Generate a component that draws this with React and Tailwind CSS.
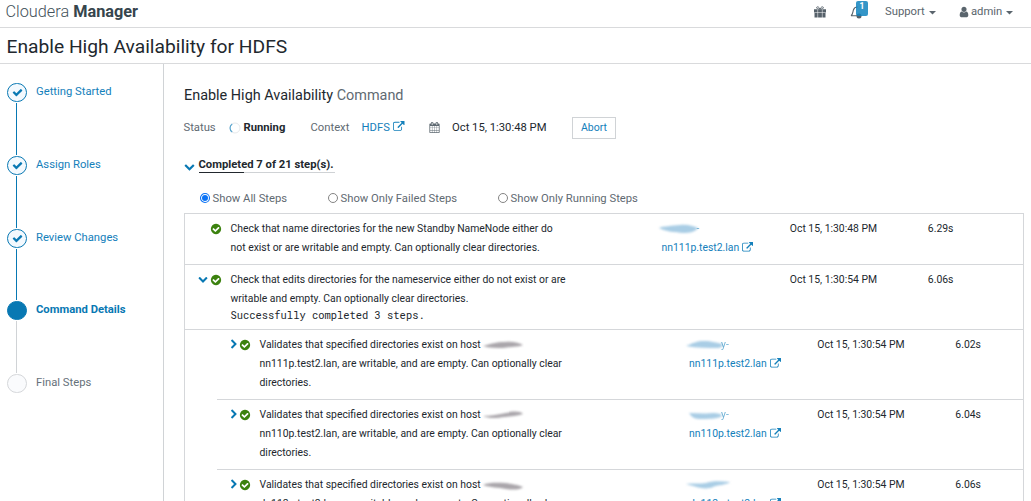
const PATHS = {
  external:
    "M1408 928v320q0 119-84.5 203.5t-203.5 84.5h-832q-119 0-203.5-84.5t-84.5-203.5v-832q0-119 84.5-203.5t203.5-84.5h704q14 0 23 9t9 23v64q0 14-9 23t-23 9h-704q-66 0-113 47t-47 113v832q0 66 47 113t113 47h832q66 0 113-47t47-113v-320q0-14 9-23t23-9h64q14 0 23 9t9 23zm384-864v512q0 26-19 45t-45 19-45-19l-176-176-652 652q-10 10-23 10t-23-10l-114-114q-10-10-10-23t10-23l652-652-176-176q-19-19-19-45t19-45 45-19h512q26 0 45 19t19 45z",
  checkCircle:
    "M1412 734q0-28-18-46l-91-90q-19-19-45-19t-45 19l-408 407-226-226q-19-19-45-19t-45 19l-91 90q-18 18-18 46 0 27 18 45l362 362q19 19 45 19 27 0 46-19l543-543q18-18 18-45zm252 162q0 209-103 385.5t-279.5 279.5-385.5 103-385.5-103-279.5-279.5-103-385.5 103-385.5 279.5-279.5 385.5-103 385.5 103 279.5 279.5 103 385.5z",
  check:
    "M1671 566q0 40-28 68l-724 724-136 136q-28 28-68 28t-68-28l-136-136-362-362q-28-28-28-68t28-68l136-136q28-28 68-28t68 28l294 295 656-657q28-28 68-28t68 28l136 136q28 28 28 68z",
  chevron:
    "M1683 808l-742 741q-19 19-45 19t-45-19l-742-741q-19-19-19-45.5t19-45.5l166-165q19-19 45-19t45 19l531 531 531-531q19-19 45-19t45 19l166 165q19 19 19 45.5t-19 45.5z",
  calendar:
    "M192 1664h288v-288h-288v288zm352 0h320v-288h-320v288zm-352-352h288v-320h-288v320zm352 0h320v-320h-320v320zm-352-384h288v-288h-288v288zm736 736h320v-288h-320v288zm-384-736h320v-288h-320v288zm768 736h288v-288h-288v288zm-384-352h320v-320h-320v320zm-352-864v-288q0-13-9.500-22.500t-22.500-9.500h-64q-13 0-22.500 9.500t-9.500 22.500v288q0 13 9.500 22.500t22.500 9.500h64q13 0 22.500-9.500t9.500-22.500zm736 864h288v-320h-288v320zm-384-384h320v-288h-320v288zm384 0h288v-288h-288v288zm32-480v-288q0-13-9.500-22.500t-22.500-9.500h-64q-13 0-22.500 9.500t-9.500 22.500v288q0 13 9.500 22.500t22.500 9.500h64q13 0 22.500-9.500t9.500-22.500zm384-64v1280q0 52-38 90t-90 38h-1408q-52 0-90-38t-38-90v-1280q0-52 38-90t90-38h128v-96q0-66 47-113t113-47h64q66 0 113 47t47 113v96h384v-96q0-66 47-113t113-47h64q66 0 113 47t47 113v96h128q52 0 90 38t38 90z",
  user:
    "M1536 1399q0 109-62.500 187t-150.500 78h-854q-88 0-150.500-78t-62.500-187q0-85 8.500-160.500t31.500-152 58.500-131 94-89 134.500-34.500q131 128 313 128t313-128q76 0 134.500 34.500t94 89 58.500 131 31.500 152 8.500 160.500zm-256-887q0 159-112.500 271.500t-271.500 112.500-271.500-112.500-112.500-271.500 112.500-271.500 271.500-112.500 271.500 112.500 112.500 271.500z",
};

function Icon({ name, className }) {
  return (
    <svg viewBox="0 0 1792 1792" fill="currentColor" className={"shrink-0 overflow-visible " + className}>
      <path d={PATHS[name]} />
    </svg>
  );
}

function Caret() {
  return (
    <svg viewBox="0 0 7 4" className="mt-[2px] ml-1 h-[4px] w-[7px] fill-current">
      <path d="M0 0h7L3.500 3.600z" />
    </svg>
  );
}

function TopBar() {
  return (
    <header className="flex h-7 shrink-0 items-center border-b border-[#d9dadc] pl-[5.500px] text-[#5a656d]">
      <div className="-mt-[3px] text-[16.300px] leading-5 text-[#43525a]">
        <span className="font-light">Cloudera</span> <span className="font-bold text-[#36454d]">Manager</span>
      </div>
      <div className="ml-auto flex h-full items-center pb-[3px] text-[11.250px]">
        <svg viewBox="0 0 12 12" className="mr-[24px] h-3 w-3 fill-[#56616a]">
          <path d="M0 3.300h3.600v3.200H0zM4.100 3.300h3.800v3.200H4.100zM8.400 3.300H12v3.200H8.400zM.5 7h3.100v4.600H.5zM4.100 7h3.800v4.600H4.100zM8.400 7h3.100v4.600H8.400z" />
          <path d="M6 3C4.800.4 2.600.3 2.600 1.700 2.600 3 4.500 3 6 3zm0 0C7.200.4 9.400.3 9.400 1.700 9.400 3 7.500 3 6 3z" fill="none" stroke="#56616a" strokeWidth="0.900" />
        </svg>
        <div className="relative mr-[17px] h-[17px] w-[18px]">
          <svg viewBox="0 0 18 17" className="h-[17px] w-[18px]" fill="none" stroke="#56616a">
            <path d="M1 11.800h8.500M1 11.800c2-1.600 1.700-4 2.500-6C4.200 3.500 5.500 3 7.500 3" strokeWidth="1.100" />
            <circle cx="9" cy="12" r="2.500" fill="#56616a" stroke="none" />
          </svg>
          <div className="absolute -top-[3px] right-0 flex h-[15px] w-3 items-center justify-center rounded-[2px] bg-[#1182bd]/85 pb-[3px] text-[8.500px] font-bold text-white">
            1
          </div>
        </div>
        <div className="flex w-[74px] items-center">Support<Caret /></div>
        <div className="flex w-[72px] items-center">
          <Icon name="user" className="-mt-px mr-[1px] -ml-px h-[12px] w-[12px]" />
          admin
          <Caret />
        </div>
      </div>
    </header>
  );
}

const STEPS = [
  { label: "Getting Started", state: "done" },
  { label: "Assign Roles", state: "done" },
  { label: "Review Changes", state: "done" },
  { label: "Command Details", state: "current" },
  { label: "Final Steps", state: "todo" },
];

const CIRCLE = {
  done: "border-[#0878b3] bg-[#f3f9fe] text-[#0878b3]",
  current: "border-[#0878b3] bg-[#0878b3]",
  todo: "border-[#d5d7da] bg-[#fafbfd]",
};
const LABEL = {
  done: "text-[#1480bb]",
  current: "font-bold text-[#0878b3]",
  todo: "text-[#66717a]",
};

function Sidebar() {
  return (
    <nav className="w-[164px] shrink-0 border-r border-[#d0d3d6] pt-[19.200px] pl-[7px]">
      {STEPS.map((s, i) => (
        <div key={s.label} className="flex h-[72.700px]">
          <div className="flex w-5 flex-col items-center">
            <div className={"flex h-[19px] w-5 shrink-0 items-center justify-center rounded-full border " + CIRCLE[s.state]}>
              {s.state === "done" && <Icon name="check" className="h-[11px] w-[11px]" />}
            </div>
            {i < 4 && (
              <div className={"my-[1px] mr-[1px] w-px flex-1 " + (s.state === "current" ? "bg-[#d0d3d6]" : "bg-[#0878b3]")} />
            )}
          </div>
          <div className={"ml-[9px] text-[11.250px] leading-[17px] " + LABEL[s.state]}>{s.label}</div>
        </div>
      ))}
    </nav>
  );
}

function Radio({ checked, label, className }) {
  return (
    <label className={"flex items-center " + className}>
      <svg viewBox="0 0 10 10" className="-mt-[2px] mr-[2.500px] h-[10px] w-[10px] overflow-visible">
        <circle cx="5" cy="5" r="4.500" fill="#fff" stroke={checked ? "#0b73f5" : "#767676"} strokeWidth={checked ? 1.1 : 0.9} />
        {checked && <circle cx="5" cy="5" r="3" fill="#0b73f5" />}
      </svg>
      <span className="leading-4">{label}</span>
    </label>
  );
}

const SMUDGES = [
  "M1 5C5 3 14 3 22 2c7-1 13 1 18 3-3 4-8 5-15 5-8-1-17-1-24-5z",
  "M1 7C8 4 12 2 19 2c8 0 13 2 18 3 2 2-1 4-5 4-9 0-20 0-31-2z",
  "M4 4c8 0 17 1 24 0 5 0 9 1 9 3-4 3-14 3-23 3-5 0-8-3-10-6z",
  "M1 5c7-1 13 0 20-1 5-2 14-2 24-1-3 3-13 3-17 5-8 3-13 1-27-3z",
];
const GRAY_SMUDGES = [
  "M0 7c8-2 13-4 22-4 8-1 14 1 18 3-5 2-13 2-20 3-7 0-14 0-20-2z",
  "M0 7c8 0 16-2 23-3 7-2 14-2 17 1-6 2-12 2-18 3-8 1-15 2-22-1z",
  "M0 6c7-3 15-2 22-2 8 1 13 2 18 4-3 3-10 3-17 2-8-2-15-1-23-4z",
];

function Smudge({ d, color, className }) {
  return (
    <svg viewBox="0 0 44 12" className={"h-3 w-11 shrink-0 overflow-visible blur-[1.300px] " + className}>
      <path d={d} fill={color} />
    </svg>
  );
}

function Row({ child, toggle, lines, mono, host, smudge, mark, graySmudge, date, duration }) {
  return (
    <div className={"flex border-b border-[#d5d7da] pt-[5px] pb-[7px] " + (child ? "ml-8 pl-[11px]" : "pl-[13px]")}>
      <div className="flex h-[19px] w-[33px] shrink-0 items-center">
        <span className={"flex " + (child ? "w-[11px]" : "w-[12px]")}>
          {toggle && <Icon name="chevron" className={"h-[10px] w-[10px] text-[#0878b3] " + (toggle === "right" ? "-mt-[1px] -ml-[0.500px] -rotate-90" : "-mt-px")} />}
        </span>
        <Icon name="checkCircle" className="mt-px h-3 w-3 text-[#3c820f]" />
      </div>
      <div className={"shrink-0 " + (child ? "-ml-[1.500px] w-[425.500px]" : "-ml-[0.500px] w-[427px]")}>
        {lines.map((l, i) => (
          <div key={l} className="flex h-[19px] items-center whitespace-nowrap">
            {l}
            {i === 0 && graySmudge && <Smudge d={graySmudge} color="#aaa6ab" className="ml-[2px]" />}
          </div>
        ))}
        {mono && <div className="h-[14px] font-['Roboto_Mono','DejaVu_Sans_Mono',monospace] text-[10.450px] leading-[14px]">{mono}</div>}
      </div>
      <div className="w-[132.300px] shrink-0 text-[#1480bb]">
        {host && (
          <>
            <div className="flex h-[19px] items-center">
              <Smudge d={smudge} color="#a9cde5" className="" />
              <span className={"opacity-60 " + (mark === "-" ? "-ml-[5px]" : "-ml-2")}>{mark}</span>
            </div>
            <div className="flex h-[19px] items-center pl-[4px]">
              {host}
              <Icon name="external" className="-mt-px ml-[3px] h-[11px] w-[11px]" />
            </div>
          </>
        )}
      </div>
      <div className="w-[138px] shrink-0 leading-[19px]">{date}</div>
      <div className="leading-[19px]">{duration}</div>
    </div>
  );
}

const CHILDREN = [
  { node: "nn111p", duration: "6.02s", mark: "y-" },
  { node: "nn110p", duration: "6.04s", mark: "y-" },
  { node: "dn112p", duration: "6.06s", mark: "" },
];

function Main() {
  return (
    <main className="min-w-0 flex-1 overflow-hidden pr-[7px] pl-5 text-[11.250px] text-[#22282e]">
      <h2 className="pt-[22px] text-[14.430px] leading-5">
        Enable High Availability <span className="text-[#5f6a72]">Command</span>
      </h2>
      <div className="mt-[11px] flex h-[22px] items-center">
        <span className="-ml-[0.500px] w-[45px] text-[#5f6a72]">Status</span>
        <svg viewBox="0 0 12 12" className="mr-[3px] h-3 w-3" fill="none">
          <circle cx="6" cy="6" r="5" stroke="#e6e9eb" />
          <path d="M3.200 1.900A5 5 0 0 0 3.200 10.100" stroke="#5ba6cf" strokeWidth="1.200" />
        </svg>
        <span className="w-[67px] font-bold">Running</span>
        <span className="w-[51px] text-[#5f6a72]">Context</span>
        <span className="flex w-[67.500px] items-center text-[#1480bb]">
          HDFS
          <Icon name="external" className="-mt-[2px] ml-[3px] h-[11.500px] w-[11.500px]" />
        </span>
        <Icon name="calendar" className="-mt-[2px] mr-[12px] h-[11px] w-[11px] text-[#5f6a72]" />
        <span className="w-[120px]">Oct 15, 1:30:48 PM</span>
        <button className="h-[22px] w-11 border border-[#d0d3d6] text-[10.500px] text-[#1480bb]">Abort</button>
      </div>
      <div className="mt-[15px] flex h-[20px] items-center">
        <Icon name="chevron" className="mt-[4px] mr-[3.500px] h-[11px] w-[11px] text-[#0878b3]" />
        <div>
          <div className="pt-px leading-[17px] font-bold">Completed 7 of 21 step(s).</div>
          <div className="-mt-px h-px w-[136px] bg-[#cfd2d5]">
            <div className="h-px w-[45px] bg-[#22282e]" />
          </div>
        </div>
      </div>
      <div className="mt-[16px] flex h-[18px] items-center pl-4 text-[#5f6a72]">
        <Radio checked label="Show All Steps" className="w-[128px]" />
        <Radio label="Show Only Failed Steps" className="w-[170px]" />
        <Radio label="Show Only Running Steps" className="" />
      </div>
      <section className="mt-[5px] border border-[#d5d7da] text-[10.400px]">
        <Row
          lines={["Check that name directories for the new Standby NameNode either do", "not exist or are writable and empty. Can optionally clear directories."]}
          host="nn111p.test2.lan"
          smudge={SMUDGES[0]}
          mark="-"
          date="Oct 15, 1:30:48 PM"
          duration="6.29s"
        />
        <Row
          toggle="down"
          lines={["Check that edits directories for the nameservice either do not exist or are", "writable and empty. Can optionally clear directories."]}
          mono="Successfully completed 3 steps."
          date="Oct 15, 1:30:54 PM"
          duration="6.06s"
        />
        {CHILDREN.map((c, i) => (
          <Row
            key={c.node}
            child
            toggle="right"
            lines={["Validates that specified directories exist on host", c.node + ".test2.lan, are writable, and are empty. Can optionally clear", "directories."]}
            graySmudge={GRAY_SMUDGES[i]}
            host={c.node + ".test2.lan"}
            smudge={SMUDGES[i + 1]}
            mark={c.mark}
            date="Oct 15, 1:30:54 PM"
            duration={c.duration}
          />
        ))}
      </section>
    </main>
  );
}

export default function App() {
  return (
    <div className="flex h-[501px] flex-col overflow-hidden bg-white font-['Roboto',sans-serif]">
      <TopBar />
      <h1 className="h-9 shrink-0 border-b border-[#d9dadc] pt-px pl-[6.500px] text-[19.230px] leading-[36px] text-[#22282e]">
        Enable High Availability for HDFS
      </h1>
      <div className="flex min-h-0 flex-1">
        <Sidebar />
        <Main />
      </div>
    </div>
  );
}
